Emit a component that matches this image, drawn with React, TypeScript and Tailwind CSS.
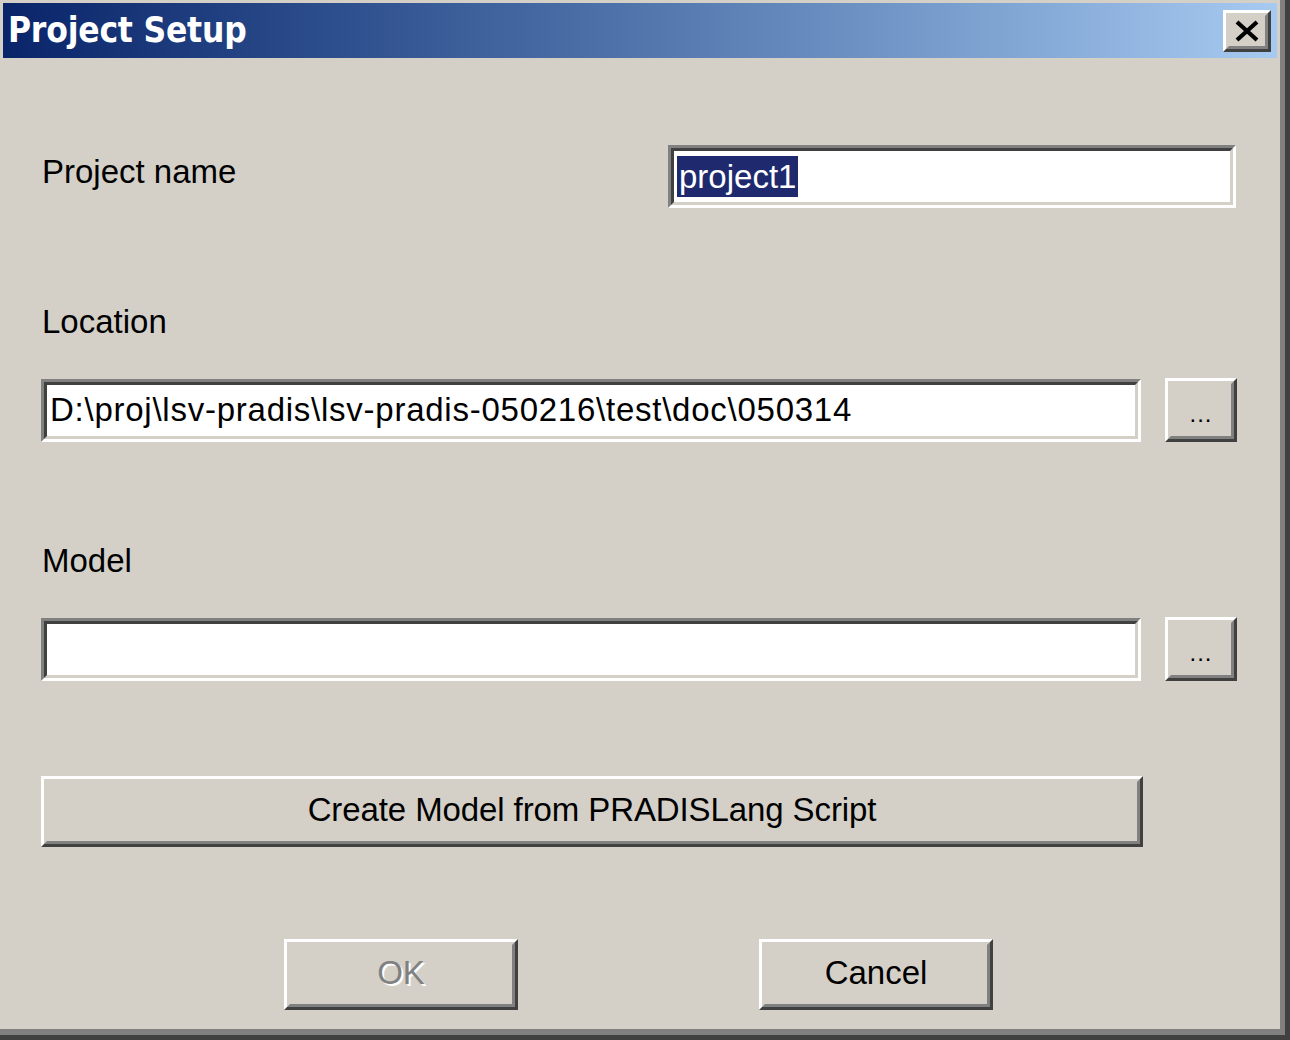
import type { ReactNode } from "react";

const FONT = { fontFamily: '"Liberation Sans", Arial, sans-serif' };

function Raised({ className = "", children }: { className?: string; children?: ReactNode }) {
  return (
    <div className={`border-[3px] border-t-white border-l-white border-r-[#404040] border-b-[#404040] ${className}`}>
      <div className="w-full h-full border-[3px] border-t-[#d4d0c8] border-l-[#d4d0c8] border-r-[#808080] border-b-[#808080] flex items-center justify-center">
        {children}
      </div>
    </div>
  );
}

function Sunken({ className = "", children }: { className?: string; children?: ReactNode }) {
  return (
    <div className={`border-[3px] border-t-[#808080] border-l-[#808080] border-r-white border-b-white ${className}`}>
      <div className="w-full h-full bg-white border-[3px] border-t-[#404040] border-l-[#404040] border-r-[#d4d0c8] border-b-[#d4d0c8] flex items-center pl-[3px] overflow-hidden">
        {children}
      </div>
    </div>
  );
}

function Label({ text, mt }: { text: string; mt: string }) {
  return <div className={`${mt} h-[48px] leading-[48px] text-[33px] text-black pl-[1px]`}>{text}</div>;
}

export default function App() {
  return (
    <div className="w-[1290px] h-[1040px] bg-[#404040] pr-[5px] pb-[5px]" style={FONT}>
      <div className="w-full h-full bg-[#808080] pr-[5px] pb-[6px]">
        <div className="w-full h-full bg-[#d4d0c8] pt-[3px] pl-[3px] pr-[3px] flex flex-col">
          {/* title bar */}
          <div className="h-[55px] bg-gradient-to-r from-[#0a246a] to-[#a6caf0] flex items-center pl-[5px] pr-[6px]">
            <span
              className="text-white font-bold text-[35px] tracking-[-0.2px] flex-1"
              style={{ fontFamily: '"DejaVu Sans Condensed", "DejaVu Sans", sans-serif' }}
            >
              Project Setup
            </span>
            <Raised className="w-[48px] h-[42px] bg-[#d4d0c8]">
              <svg width="26" height="22" viewBox="0 0 26 22">
                <path d="M3 2 L23 20 M23 2 L3 20" stroke="#000" strokeWidth="4.2" />
              </svg>
            </Raised>
          </div>

          <div className="pl-[38px] w-[1234px] flex flex-col">
            {/* project name */}
            <div className="mt-[87px] h-[63px] flex items-center">
              <div className="flex-1 text-[33px] text-black pl-[1px] -mt-[9px]">Project name</div>
              <Sunken className="w-[568px] h-[63px] mr-[1px]">
                <span className="bg-[#1f2a6e] text-white text-[33px] leading-[41px] h-[41px] px-[2px]">project1</span>
              </Sunken>
            </div>

            {/* location */}
            <Label text="Location" mt="mt-[90px]" />
            <div className="mt-[32px] flex items-center gap-[24px]">
              <Sunken className="w-[1100px] h-[63px]">
                <span className="text-[33px] tracking-[0.75px] text-black whitespace-nowrap">
                  D:\proj\lsv-pradis\lsv-pradis-050216\test\doc\050314
                </span>
              </Sunken>
              <Raised className="w-[72px] h-[64px]">
                <span className="text-[24px] text-black mt-[8px] tracking-[1px]">...</span>
              </Raised>
            </div>

            {/* model */}
            <Label text="Model" mt="mt-[95px]" />
            <div className="mt-[32px] flex items-center gap-[24px]">
              <Sunken className="w-[1100px] h-[63px]" />
              <Raised className="w-[72px] h-[64px]">
                <span className="text-[24px] text-black mt-[8px] tracking-[1px]">...</span>
              </Raised>
            </div>

            {/* create model */}
            <Raised className="mt-[95px] w-[1102px] h-[71px]">
              <span className="text-[33px] tracking-[-0.1px] text-black -mt-[4px]">Create Model from PRADISLang Script</span>
            </Raised>

            {/* ok / cancel */}
            <div className="mt-[92px] flex">
              <Raised className="ml-[243px] w-[234px] h-[71px]">
                <span className="text-[33px] text-[#808080] -mt-[4px] [text-shadow:2px_2px_0_#ffffff]">OK</span>
              </Raised>
              <Raised className="ml-[241px] w-[234px] h-[71px]">
                <span className="text-[33px] text-black -mt-[4px]">Cancel</span>
              </Raised>
            </div>
          </div>
        </div>
      </div>
    </div>
  );
}
